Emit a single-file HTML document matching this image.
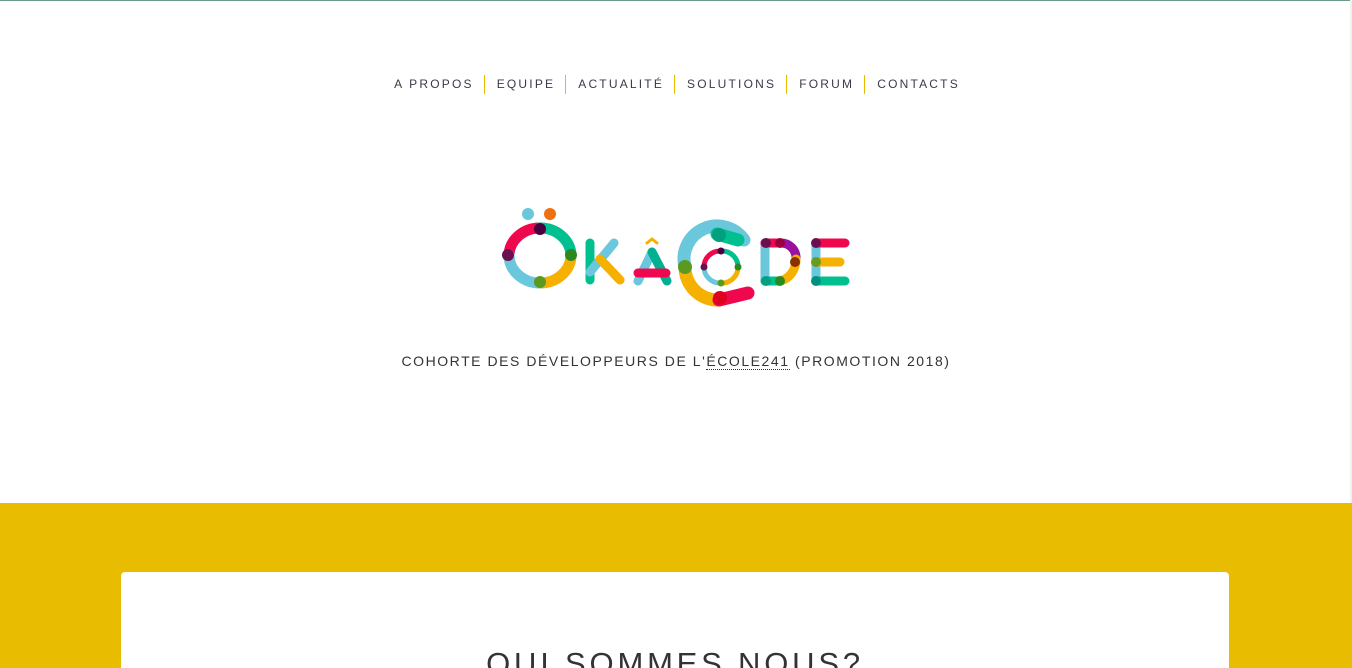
<!DOCTYPE html>
<html style="overflow:hidden;width:1352px;height:668px"><head><meta charset="utf-8"><style>
*{margin:0;padding:0;box-sizing:border-box}
body{width:1352px;height:668px;overflow:hidden;background:#fff;font-family:"Liberation Sans",sans-serif;position:relative}
.top{position:absolute;top:0;left:0;width:1352px;height:1px;background:#6a9a88}
.nav{position:absolute;top:75px;left:0;width:1352px;display:flex;justify-content:center;font-size:12px;letter-spacing:2.2px;color:#3a3a4a}
.nav span{padding:0 10px 0 12px;border-left:1px solid #e6bc00;line-height:19px}
.nav span:first-child{border-left:none}
.sub{position:absolute;top:353px;left:0;width:1352px;text-align:center;font-size:14px;letter-spacing:1.55px;color:#333}
.sub u{text-decoration:none;border-bottom:1px dotted #333}
.band{position:absolute;top:503px;left:0;width:1352px;height:165px;background:#e8bc00}
.card{position:absolute;top:572px;left:121px;width:1108px;height:96px;background:#fff;border-radius:4px 4px 0 0;overflow:hidden}
.card h2{position:absolute;top:74px;left:0;width:1108px;text-align:center;font-weight:normal;font-size:31px;letter-spacing:3.8px;color:#333;white-space:nowrap}
.sb{position:absolute;right:0;top:0;width:2px;height:503px;background:#eef2f0}
</style></head><body>
<div class="top"></div>
<div class="sb"></div>
<div class="nav"><span>A PROPOS</span><span>EQUIPE</span><span>ACTUALITÉ</span><span>SOLUTIONS</span><span>FORUM</span><span>CONTACTS</span></div>
<svg style="position:absolute;left:0;top:0" width="1352" height="503" fill="none" stroke-linecap="round">
<circle cx="528" cy="214" r="6" fill="#6bc8dc"/><circle cx="550" cy="214" r="6" fill="#f07010"/>
<g stroke-width="11">
<path d="M509 255 A31 28 0 0 1 540 228" stroke="#f0084f"/>
<path d="M540 228 A31 28 0 0 1 571 255" stroke="#00c090"/>
<path d="M571 255 A31 28 0 0 1 540 283" stroke="#f5b000"/>
<path d="M540 283 A31 28 0 0 1 509 255" stroke="#6bc8dc"/>
</g>
<circle cx="540" cy="229" r="6" fill="#4a0040"/><circle cx="508" cy="255" r="6" fill="#6a1050"/><circle cx="571" cy="255" r="6" fill="#2a8a20"/><circle cx="540" cy="282" r="6" fill="#5a9a20"/>
<g stroke-width="9">
<path d="M590 243 V280" stroke="#00c090"/>
<path d="M590 272 L614 243" stroke="#6bc8dc"/>
<path d="M600 259 L620 280" stroke="#f5b000"/>
<path d="M638 281 L652 252" stroke="#6bc8dc"/>
<path d="M652 252 L667 281" stroke="#00b090"/>
<path d="M638 273 H666" stroke="#f0084f"/>
</g>
<path d="M647 243 L652 239 L657 243" stroke="#f5b000" stroke-width="3"/>
<g stroke-width="13">
<path d="M744 240 A33 33 0 0 0 685 267" stroke="#6bc8dc"/>
<path d="M685 267 A33 33 0 0 0 719 300" stroke="#f5b000"/>
<path d="M719 300 L748 293" stroke="#f0084f"/>
<path d="M717 234 L738 240" stroke="#00c090"/>
</g>
<circle cx="719" cy="235" r="7" fill="#00a080"/><circle cx="685" cy="267" r="7" fill="#5a9a20"/><circle cx="720" cy="298" r="7" fill="#e00020"/>
<g stroke-width="5">
<path d="M704 267 A16 16 0 0 1 721 251" stroke="#f0084f"/>
<path d="M721 251 A16 16 0 0 1 738 267" stroke="#00c090"/>
<path d="M738 267 A16 16 0 0 1 721 283" stroke="#f5b000"/>
<path d="M721 283 A16 16 0 0 1 704 267" stroke="#6bc8dc"/>
</g>
<circle cx="721" cy="251" r="3.5" fill="#4a0040"/><circle cx="704" cy="267" r="3.5" fill="#6a1050"/><circle cx="738" cy="267" r="3.5" fill="#2a8a20"/><circle cx="721" cy="283" r="3.5" fill="#5a9a20"/>
<g stroke-width="9">
<path d="M765 243 V281" stroke="#6bc8dc"/>
<path d="M765 243 H780 A15 15 0 0 1 796 259" stroke="#9a10a0"/>
<path d="M765 243 H780" stroke="#f0084f"/>
<path d="M796 259 A20 22 0 0 1 780 281 H765" stroke="#f5b000"/>
<path d="M765 281 H780" stroke="#00c090"/>
<path d="M816 243 V281" stroke="#6bc8dc"/>
<path d="M816 243 H845" stroke="#f0084f"/>
<path d="M816 262 H840" stroke="#f5b000"/>
<path d="M816 281 H845" stroke="#00c090"/>
</g>
<circle cx="766" cy="243" r="5" fill="#6a1050"/><circle cx="780" cy="243" r="5" fill="#9a0040"/><circle cx="795" cy="262" r="5" fill="#8a3000"/><circle cx="780" cy="281" r="5" fill="#2a8a20"/><circle cx="766" cy="281" r="5" fill="#00a080"/>
<circle cx="816" cy="243" r="5" fill="#6a1050"/><circle cx="816" cy="262" r="5" fill="#6a9a20"/><circle cx="816" cy="281" r="5" fill="#009080"/>
</svg>
<div class="sub">COHORTE DES DÉVELOPPEURS DE L'<u>ÉCOLE241</u> (PROMOTION 2018)</div>
<div class="band"></div>
<div class="card"><h2>QUI SOMMES NOUS?</h2></div>
</body></html>
